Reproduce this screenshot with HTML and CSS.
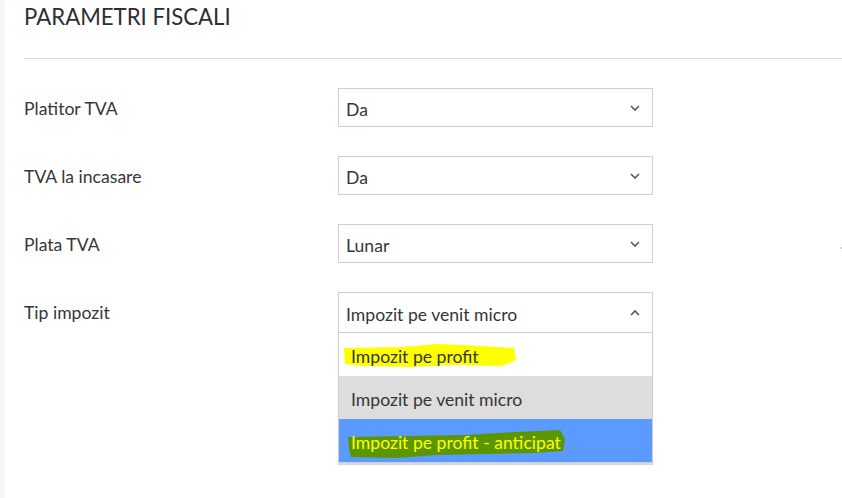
FILE: index.html
```html
<!DOCTYPE html>
<html>
<head>
<meta charset="utf-8">
<link rel="stylesheet" href="styles.css">
</head>
<body>
<div class="page">
  <h1 class="title">PARAMETRI FISCALI</h1>
  <hr class="rule">
  <div class="form">
    <div class="row">
      <div class="label">Platitor TVA</div>
      <div class="select"><span class="val">Da</span><svg class="chev" viewBox="0 0 10 6"><path d="M1 1 L5 5 L9 1"/></svg></div>
    </div>
    <div class="row">
      <div class="label">TVA la incasare</div>
      <div class="select"><span class="val">Da</span><svg class="chev" viewBox="0 0 10 6"><path d="M1 1 L5 5 L9 1"/></svg></div>
    </div>
    <div class="row">
      <div class="label">Plata TVA</div>
      <div class="select"><span class="val">Lunar</span><svg class="chev" viewBox="0 0 10 6"><path d="M1 1 L5 5 L9 1"/></svg></div>
    </div>
    <div class="row">
      <div class="label">Tip impozit</div>
      <div class="combo">
        <div class="select open"><span class="val">Impozit pe venit micro</span><svg class="chev" viewBox="0 0 10 6"><path d="M1 5 L5 1 L9 5"/></svg></div>
        <ul class="list">
          <li class="opt"><svg class="mark" viewBox="0 0 175 26" preserveAspectRatio="none"><path class="mark-yellow" d="M2 6 L60 5 L95 2 L140 4 L172 6 L174 18 L160 24 L110 23 L70 25 L20 24 L3 22 Z"/></svg><span class="opt-text">Impozit pe profit</span></li>
          <li class="opt sel"><span class="opt-text">Impozit pe venit micro</span></li>
          <li class="opt hover"><svg class="mark" viewBox="0 0 222 30" preserveAspectRatio="none"><path class="mark-green" d="M2 8 L60 7 L120 6 L170 3 L214 1 L219 10 L217 22 L190 24 L140 25 L90 26 L50 29 L5 28 L3 20 Z"/></svg><span class="opt-text">Impozit pe profit - anticipat</span></li>
        </ul>
      </div>
    </div>
  </div>
  <span class="dot"></span>
</div>
</body>
</html>
```

FILE: styles.css
```css
html, body {
  margin: 0;
  padding: 0;
  background: #ffffff;
}
body {
  font-family: Lato, "Open Sans", sans-serif;
  color: #333333;
}
.page {
  position: relative;
  min-height: 498px;
  box-sizing: border-box;
  border-left: 5px solid #f6f6f6;
  padding-left: 19px;
}
.title {
  margin: 0;
  padding-top: 4px;
  font-size: 22.2px;
  font-weight: 400;
  line-height: 26px;
  color: #2f2f33;
  letter-spacing: 0;
}
.rule {
  margin: 28px 0 0 0;
  border: 0;
  border-top: 1px solid #dcdcdc;
  height: 0;
}
.form {
  display: flex;
  flex-direction: column;
  gap: 29px;
  padding-top: 29px;
}
.row {
  display: flex;
  align-items: flex-start;
}
.label {
  box-sizing: border-box;
  width: 314px;
  height: 39px;
  font-size: 17.6px;
  line-height: 36px;
  padding-top: 3px;
  color: #363636;
}
.select {
  box-sizing: border-box;
  width: 315px;
  height: 39px;
  border: 1px solid #cfcfcf;
  display: flex;
  align-items: center;
  justify-content: space-between;
  padding: 0 12px 0 7px;
  font-size: 17.6px;
  color: #363636;
  background: #fff;
}
.val {
  padding-top: 3px;
}
.select.open {
  height: 41px;
}
.chev {
  width: 10px;
  height: 6px;
  fill: none;
  stroke: #555;
  stroke-width: 1.6;
}
.combo {
  width: 315px;
}
.list {
  list-style: none;
  margin: 0;
  padding: 0;
  box-sizing: border-box;
  width: 315px;
  border: 1px solid #cfcfcf;
  border-top: 0;
  box-shadow: 0 2px 1px rgba(0,0,0,0.15);
}
.opt {
  position: relative;
  height: 43px;
  display: flex;
  align-items: center;
  padding-left: 12px;
  font-size: 17.6px;
  color: #363636;
}
.opt.sel {
  background: #dddddd;
}
.opt.hover {
  background: #5b9bff;
  height: 43px;
}
.opt-text {
  position: relative;
  padding-top: 3px;
}
.hover .opt-text {
  color: #ffff00;
}
.mark {
  position: absolute;
  left: 3px;
  top: 9px;
  width: 175px;
  height: 26px;
}
.hover .mark {
  left: 7px;
  top: 10px;
  width: 222px;
  height: 30px;
}
.mark-yellow {
  fill: #ffff00;
}
.mark-green {
  fill: #5a9600;
}
.dot {
  position: absolute;
  left: 836px;
  top: 247px;
  width: 1px;
  height: 2px;
  background: #bbb;
}
```
